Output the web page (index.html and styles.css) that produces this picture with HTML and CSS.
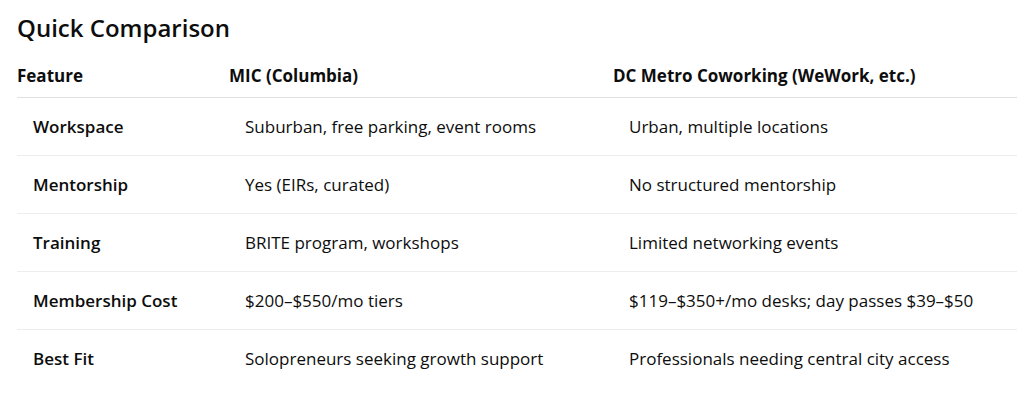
FILE: index.html
```html
<!DOCTYPE html>
<html>
<head>
<meta charset="utf-8">
<link rel="stylesheet" href="styles.css">
</head>
<body>
<div class="page">
  <h2 class="title">Quick Comparison</h2>
  <table class="cmp">
    <colgroup>
      <col class="c1"><col class="c2"><col class="c3">
    </colgroup>
    <thead>
      <tr><th>Feature</th><th>MIC (Columbia)</th><th>DC Metro Coworking (WeWork, etc.)</th></tr>
    </thead>
    <tbody>
      <tr><td class="feat">Workspace</td><td>Suburban, free parking, event rooms</td><td>Urban, multiple locations</td></tr>
      <tr><td class="feat">Mentorship</td><td>Yes (EIRs, curated)</td><td>No structured mentorship</td></tr>
      <tr><td class="feat">Training</td><td>BRITE program, workshops</td><td>Limited networking events</td></tr>
      <tr><td class="feat">Membership Cost</td><td>$200–$550/mo tiers</td><td>$119–$350+/mo desks; day passes $39–$50</td></tr>
      <tr><td class="feat">Best Fit</td><td>Solopreneurs seeking growth support</td><td>Professionals needing central city access</td></tr>
    </tbody>
  </table>
</div>
</body>
</html>
```
FILE: styles.css
```css
html, body { margin: 0; padding: 0; background: #fff; }
body {
  font-family: "Open Sans", "Noto Sans", "Liberation Sans", sans-serif;
  color: #0d0d0d;
}
.page { padding: 12px 7px 0 17px; }
.title {
  margin: 0 0 13px 0;
  font-size: 24px;
  line-height: 32px;
  font-weight: 600;
}
.cmp {
  width: 1000px;
  border-collapse: collapse;
  table-layout: fixed;
}
.c1 { width: 212px; }
.c2 { width: 384px; }
.c3 { width: 404px; }
.cmp th {
  text-align: left;
  font-size: 17px;
  font-weight: 700;
  padding: 8px 0 10px 0;
  line-height: 22px;
  border-bottom: 1px solid #e0e0e0;
}
.cmp td {
  font-size: 17px;
  line-height: 22px;
  height: 57px;
  padding: 0 0 0 16px;
  border-bottom: 1px solid #ededed;
}
.cmp tbody tr:last-child td { border-bottom: none; }
.cmp td.feat { font-weight: 600; }
```
